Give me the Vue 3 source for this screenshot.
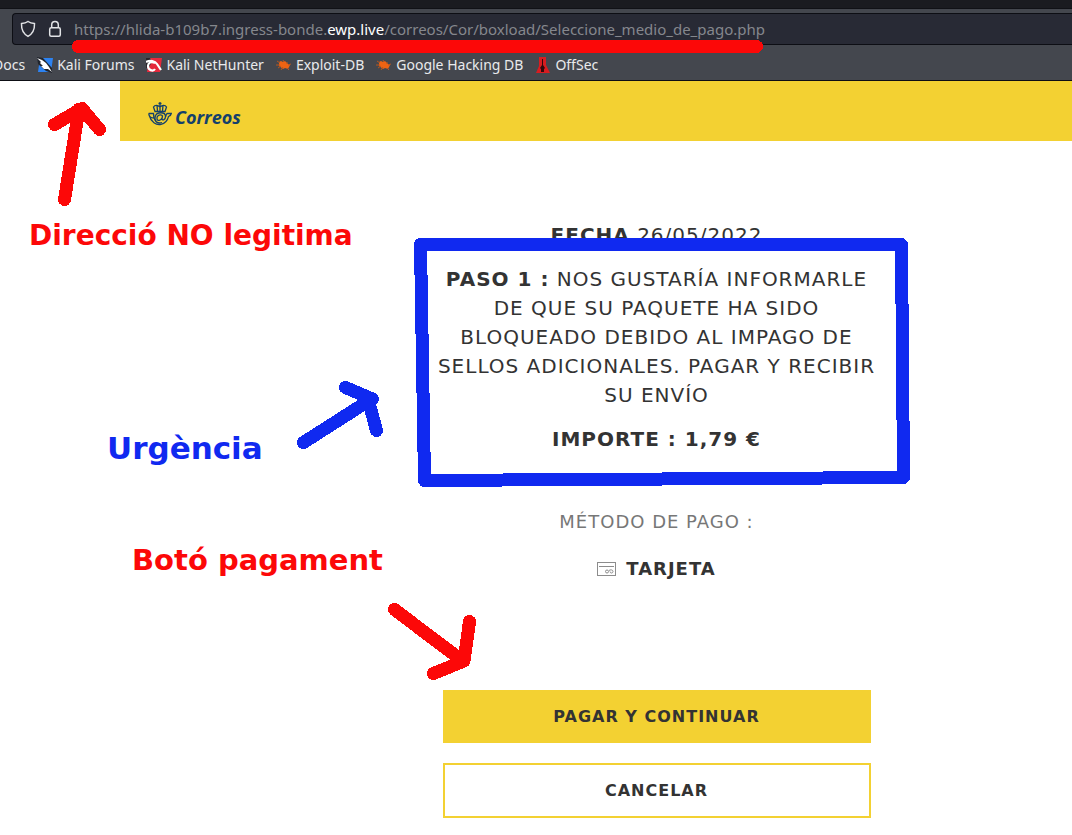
<script setup>
const bookmarks = [
  { label: 'Docs', icon: '' },
  { label: 'Kali Forums', icon: 'forums' },
  { label: 'Kali NetHunter', icon: 'nethunter' },
  { label: 'Exploit-DB', icon: 'bug' },
  { label: 'Google Hacking DB', icon: 'bug' },
  { label: 'OffSec', icon: 'offsec' },
]
</script>

<template>
  <div class="screen">
    <header class="browser">
      <div class="tabstrip"></div>
      <div class="toolbar">
        <div class="urlbar">
          <svg class="lead" width="16" height="18" viewBox="0 0 16 18" aria-hidden="true">
            <path d="M8 1.5C6.2 2.8 4 3.4 1.5 3.6C1.3 9 3 13.6 8 16.3C13 13.6 14.7 9 14.5 3.6C12 3.4 9.800 2.800 8 1.500Z" />
          </svg>
          <svg class="lead" width="14" height="18" viewBox="0 0 14 18" aria-hidden="true">
            <rect x="1.700" y="7.700" width="10.600" height="8.600" rx="1.500" />
            <path d="M3.700 7.700V4.800a3.300 3.300 0 0 1 6.600 0V7.700" />
          </svg>
          <span class="url">https://hlida-b109b7.ingress-bonde.<b>ewp.live</b>/correos/Cor/boxload/Seleccione_medio_de_pago.php</span>
        </div>
      </div>
      <nav class="bookmarks" aria-label="Bookmarks">
        <a v-for="item in bookmarks" :key="item.label" href="#">
          <svg v-if="item.icon === 'forums'" width="16" height="16" viewBox="0 0 16 16" aria-hidden="true">
            <path fill="#2d83f2" d="M3 1H16L14 15H1Z" />
            <path fill="#22262e" d="M0 0L6 1L15 11L15 16L9 14L1 7Z" />
            <path fill="#fff" d="M0 1L5 3L9 6L12 10L15 15L11 12L7 12L4 9L6 9L3 6L4 5Z" />
          </svg>
          <svg v-else-if="item.icon === 'nethunter'" width="16" height="16" viewBox="0 0 16 16" aria-hidden="true">
            <path fill="#e4283b" d="M3 1H16L14 15H1Z" />
            <path fill="#2a2429" d="M0 1L4 1L6 5L3 10L0 11Z" />
            <path d="M0 5C4 3 9 4 11 7L15 13M9 6C5 4 2 6 2 9C2 13 7 15 9 12" fill="none" stroke="#fff" stroke-width="2.200" />
          </svg>
          <svg v-else-if="item.icon === 'bug'" width="16" height="16" viewBox="0 0 16 16" aria-hidden="true">
            <path fill="#ee6313" d="M3 5L5 4L7 5L9 4L12 7L14 8L13 10L12 12L9 11L7 12L3 9Z" />
            <path d="M1 4L4 6M0 8L4 8M2 11L5 9M5 13L7 10M7 3L8 5M11 5L11 7M12 8L15 7M11 11L13 13" stroke="#b8561f" fill="none" />
          </svg>
          <svg v-else-if="item.icon === 'offsec'" width="16" height="18" viewBox="0 0 16 18" aria-hidden="true">
            <path fill="#d81c20" d="M4 1H11V9L15 17H1L4 10Z" />
            <path fill="#31090c" d="M7 3H8V9L10 12L9 13V16H6V13L5 12L7 9Z" />
          </svg>
          <span>{{ item.label }}</span>
        </a>
      </nav>
    </header>

    <div class="site">
      <div class="brandbar">
        <a href="#" class="brand">
          <svg width="24" height="24" viewBox="0 0 24 24" aria-hidden="true">
            <g fill="none" stroke="#14406b" stroke-width="1.300">
              <path d="M12 0V4M10.500 1.500H13.500M7 9.500L5.500 5C7 2.500 10 3 12 5C14 3 17 2.500 18.500 5L17 9.500ZM9 3.500L9.500 9M12 4V9M15 3.500L14.500 9" />
              <path d="M0.700 11.500H5.500C5.500 14.500 6 17 8 19M0.700 11.500C1 15 3 16 6 16M1.500 14C3 20 8 23.300 13 22.300C19 21 20 16.500 20.500 14.500C22 14 23 13 23.300 11.500H19.500C18.500 11.500 18 13 17.700 14.500" />
              <path d="M14.500 13.500C11 11.500 8.500 14.500 9 17C9.500 19.500 13 18.500 14 16L14.600 13.500L14 17C14.500 19 17.500 17.500 17.500 14.500C17.500 9.500 8.500 9.500 7.200 14.500C6 20 10 22 14 20.500" />
            </g>
          </svg>
          <span>Correos</span>
        </a>
      </div>

      <main class="content">
        <p class="line"><strong>FECHA</strong> 26/05/2022</p>
        <p class="line"><strong>PASO 1 :</strong> NOS GUSTARÍA INFORMARLE DE QUE SU PAQUETE HA SIDO BLOQUEADO DEBIDO AL IMPAGO DE SELLOS ADICIONALES. PAGAR Y RECIBIR SU ENVÍO</p>
        <p class="line"><strong>IMPORTE : 1,79 €</strong></p>
        <p class="method">MÉTODO DE PAGO :</p>
        <p class="card">
          <svg width="20" height="14" viewBox="0 0 20 14" fill="none" stroke="#8c8c8c" aria-hidden="true">
            <rect x="0.500" y="0.500" width="18" height="13" />
            <path d="M2 4.500H17" />
            <circle cx="10" cy="9.500" r="1.500" />
            <path d="M12 8.500C13 7.500 16 7.500 16 9.500C16 11.500 13 11.500 13 9.500" />
          </svg>
          <strong>TARJETA</strong>
        </p>
        <div class="actions">
          <button type="button" class="primary">PAGAR Y CONTINUAR</button>
          <button type="button">CANCELAR</button>
        </div>
      </main>
    </div>

    <!-- Hand-drawn review marks laid over the page -->
    <svg class="marks" width="1000" height="760" viewBox="0 0 1000 760" aria-hidden="true">
      <g class="red">
        <path d="M78.500 46.500H756.500" />
        <path d="M64.500 199.500L79 109M54.500 124.500L82 108.500L99.500 129.500" />
        <path d="M394.500 609.500L460 659M469.500 621.500L464 661L433.500 673.500" />
      </g>
      <g class="blue">
        <path d="M420.500 244.500L424.500 480.500L903.500 477.500L901.500 244.500Z" />
        <path d="M303.500 442.500L370 400M345.500 387.500L372.500 399L368 399L376.500 430.500" />
      </g>
    </svg>
    <span class="note address">Direcció NO legitima</span>
    <span class="note urgency">Urgència</span>
    <span class="note payment">Botó pagament</span>
  </div>
</template>

<style>
body {
  background: #fff;
}
</style>

<style scoped>
.screen {
  position: relative;
  overflow: hidden;
  min-height: 100vh;
  box-sizing: border-box;
  font-family: "DejaVu Sans", Verdana, sans-serif;
  color: #333;
}
.browser {
  background: #44474e;
  border-bottom: 1px solid #0d0e14;
  font-family: "Noto Sans", sans-serif;
  color: #e9eaec;
}
.tabstrip {
  height: 8px;
  background: #1a1b20;
  border-bottom: 1px solid #101116;
}
.toolbar {
  padding: 4px 0 0 12px;
}
.urlbar {
  display: flex;
  align-items: center;
  height: 30px;
  padding-left: 7px;
  border: 1px solid #0d0e14;
  border-right: 0;
  border-radius: 4px 0 0 4px;
  background: #282a35;
}
.lead {
  flex: none;
  margin-right: 12px;
  fill: none;
  stroke: #e2e3e6;
  stroke-width: 1.5;
}
.url {
  color: #85878d;
  font-size: 15px;
  white-space: nowrap;
}
.url b {
  color: #fff;
  font-weight: 400;
}
.bookmarks {
  display: flex;
  align-items: center;
  gap: 12px;
  height: 31px;
  margin-left: -7px;
  padding-top: 4px;
}
.bookmarks a {
  display: flex;
  align-items: center;
  gap: 4px;
  color: inherit;
  font-size: 14px;
  line-height: 20px;
  text-decoration: none;
  white-space: nowrap;
}
.site {
  margin-left: 120px;
}
.brandbar {
  display: flex;
  align-items: center;
  height: 60px;
  padding-left: 28px;
  background: #f3d132;
}
.brand {
  display: flex;
  align-items: flex-end;
  gap: 3px;
  margin-top: 6px;
  color: #14406b;
  font: italic 700 18px/18px "Open Sans", sans-serif;
  text-decoration: none;
}
.content {
  display: flex;
  flex-direction: column;
  align-items: center;
  padding: 80px 0 17px 121px;
  text-align: center;
  letter-spacing: 1px;
}
.line {
  max-width: 444px;
  margin: 0 0 15px;
  font-size: 20px;
  line-height: 29px;
}
.method {
  margin: 40px 0 0;
  color: #777;
  font-size: 18px;
  line-height: 26px;
}
.card {
  display: flex;
  align-items: center;
  gap: 9px;
  margin: 21px 0 0;
  font-size: 18px;
  line-height: 26px;
}
.actions {
  display: flex;
  flex-direction: column;
  gap: 20px;
  width: 100%;
  max-width: 428px;
  margin-top: 108px;
}
button {
  height: 55px;
  padding: 0;
  border: 2px solid #f3d132;
  background: #fff;
  color: #333;
  font: bold 16px/24px "DejaVu Sans", Verdana, sans-serif;
  letter-spacing: 1px;
}
.primary {
  height: 53px;
  background: #f3d132;
}
.marks {
  position: absolute;
  top: 0;
  left: 0;
  pointer-events: none;
}
.marks path {
  fill: none;
  stroke-width: 13;
  stroke-linecap: round;
  stroke-linejoin: round;
  shape-rendering: crispEdges;
}
.red path {
  stroke: #fc0808;
}
.blue path {
  stroke: #1029f0;
}
.note {
  position: absolute;
  color: #fc0808;
  font-size: 28px;
  font-weight: 700;
  line-height: 36px;
  white-space: nowrap;
}
.address {
  top: 218px;
  left: 29px;
}
.urgency {
  top: 430px;
  left: 107px;
  color: #1029f0;
  font-size: 31px;
}
.payment {
  top: 542px;
  left: 132px;
  font-size: 29px;
}
</style>
